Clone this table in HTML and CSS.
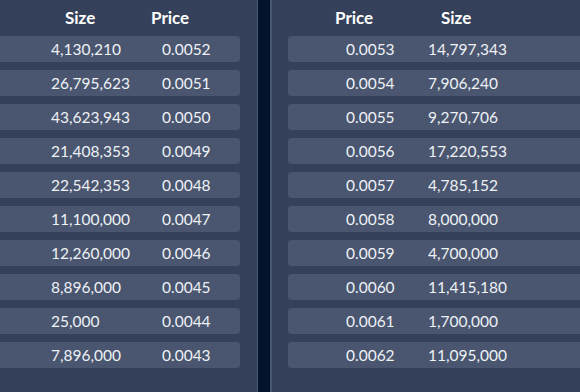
FILE: index.html
```html
<!DOCTYPE html>
<html>
<head>
<meta charset="utf-8">
<link rel="stylesheet" href="styles.css">
</head>
<body>
<div class="book">
  <section class="side bids">
    <div class="head"><span>Size</span><span>Price</span></div>
    <div class="rows">
      <div class="row"><span>4,130,210</span><span>0.0052</span></div>
      <div class="row"><span>26,795,623</span><span>0.0051</span></div>
      <div class="row"><span>43,623,943</span><span>0.0050</span></div>
      <div class="row"><span>21,408,353</span><span>0.0049</span></div>
      <div class="row"><span>22,542,353</span><span>0.0048</span></div>
      <div class="row"><span>11,100,000</span><span>0.0047</span></div>
      <div class="row"><span>12,260,000</span><span>0.0046</span></div>
      <div class="row"><span>8,896,000</span><span>0.0045</span></div>
      <div class="row"><span>25,000</span><span>0.0044</span></div>
      <div class="row"><span>7,896,000</span><span>0.0043</span></div>
    </div>
  </section>
  <div class="divider"></div>
  <section class="side asks">
    <div class="head"><span>Price</span><span>Size</span></div>
    <div class="rows">
      <div class="row"><span>0.0053</span><span>14,797,343</span></div>
      <div class="row"><span>0.0054</span><span>7,906,240</span></div>
      <div class="row"><span>0.0055</span><span>9,270,706</span></div>
      <div class="row"><span>0.0056</span><span>17,220,553</span></div>
      <div class="row"><span>0.0057</span><span>4,785,152</span></div>
      <div class="row"><span>0.0058</span><span>8,000,000</span></div>
      <div class="row"><span>0.0059</span><span>4,700,000</span></div>
      <div class="row"><span>0.0060</span><span>11,415,180</span></div>
      <div class="row"><span>0.0061</span><span>1,700,000</span></div>
      <div class="row"><span>0.0062</span><span>11,095,000</span></div>
    </div>
  </section>
</div>
</body>
</html>
```
FILE: styles.css
```css
html, body {
  margin: 0;
  padding: 0;
  background: #35415a;
}
body {
  width: 580px;
  height: 392px;
  overflow: hidden;
  font-family: Lato, "Open Sans", sans-serif;
}
.book {
  display: flex;
  height: 392px;
}
.side {
  overflow: hidden;
}
.bids {
  width: 257px;
  flex: none;
}
.divider {
  flex: none;
  width: 12px;
  background: #04142f;
  border-left: 1px solid #4b5770;
  border-right: 2px solid #4b5770;
}
.asks {
  flex: 1;
}
.head {
  height: 36px;
  line-height: 36px;
  display: grid;
  color: #ffffff;
  font-weight: 700;
  font-size: 17px;
}
.rows {
  display: flex;
  flex-direction: column;
  gap: 8px;
}
.row {
  height: 26px;
  line-height: 26px;
  display: grid;
  background: #4a566f;
  color: #eef1f6;
  font-size: 15.5px;
}
.bids .head {
  grid-template-columns: 86px auto;
  padding-left: 65px;
}
.bids .row {
  width: 240px;
  border-radius: 0 4px 4px 0;
  grid-template-columns: 111px auto;
  padding-left: 51px;
  box-sizing: border-box;
}
.asks .head {
  grid-template-columns: 106px auto;
  padding-left: 63px;
}
.asks .rows {
  padding-left: 16px;
}
.asks .row {
  border-radius: 4px 0 0 4px;
  grid-template-columns: 82px auto;
  padding-left: 58px;
}
```
